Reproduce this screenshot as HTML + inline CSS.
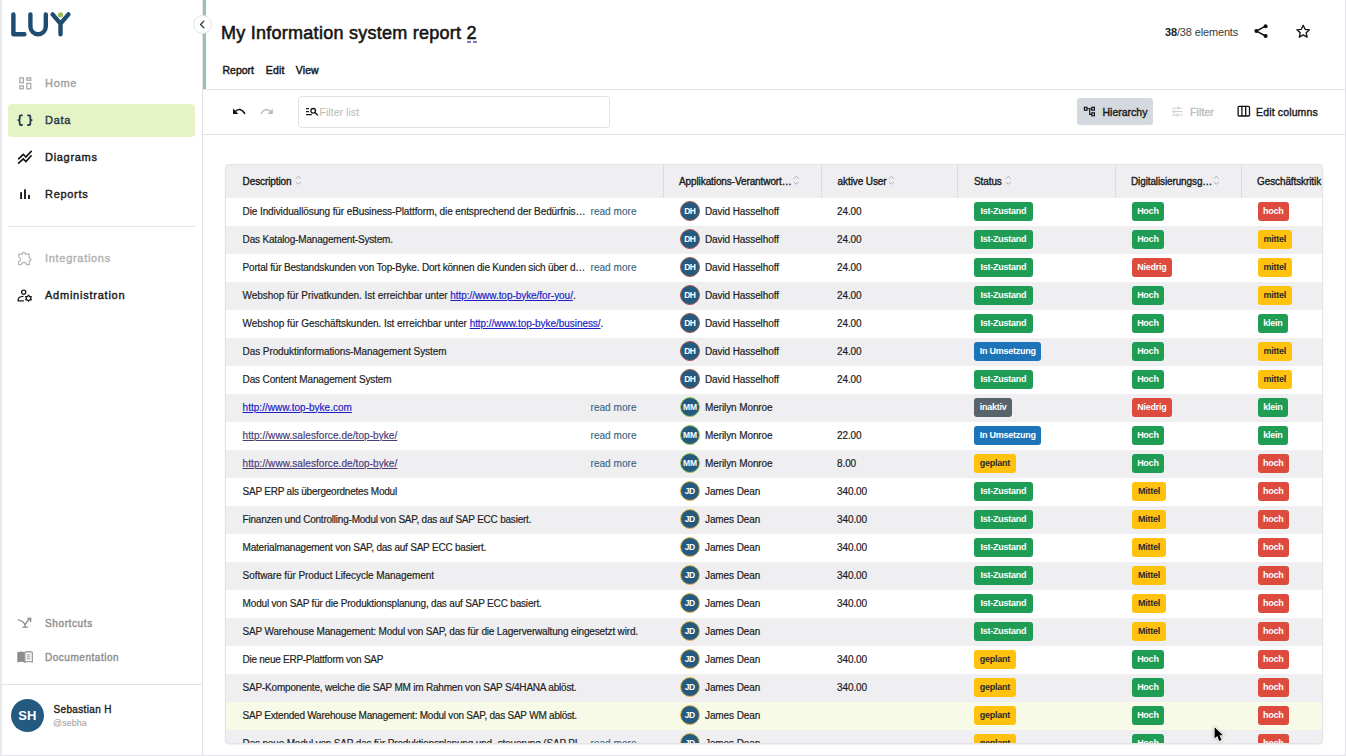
<!DOCTYPE html>
<html><head><meta charset="utf-8">
<style>
*{box-sizing:border-box;margin:0;padding:0}
html,body{width:1346px;height:756px;overflow:hidden;background:#fff}
body{position:relative;font-family:"Liberation Sans",sans-serif;color:#1a1a1a}
.a{position:absolute}
.t{position:absolute;white-space:nowrap;line-height:14px}
svg{position:absolute;overflow:visible}
/* sidebar */
.nav{position:absolute;left:45px;font-size:11px;font-weight:normal;-webkit-text-stroke:0.4px currentColor;letter-spacing:0.7px;line-height:14px;white-space:nowrap}
/* table */
#tbl{position:absolute;left:225px;top:163.5px;width:1098px;height:580.5px;border-radius:4px;overflow:hidden;background:#fff;box-shadow:0 1px 2px rgba(0,0,0,.07)}
#tbl:after{content:"";position:absolute;left:0;top:0;right:0;bottom:0;border:1px solid #e3e3e7;border-radius:4px;z-index:5}
.hd{position:absolute;left:0;top:0;height:34px;width:1098px;background:#efeff1}
.hc{position:absolute;top:1px;height:34px;font-size:10px;font-weight:normal;-webkit-text-stroke:0.35px #1a1a1a;line-height:34px;letter-spacing:-0.1px;color:#1a1a1a;white-space:nowrap}
.sep{position:absolute;top:0;width:1px;height:34px;background:#dcdce0}
.row{position:absolute;left:0;width:1098px;height:28px}
.row.g{background:#efeff1}
.row.h{background:#f7fae6}
.c{position:absolute;top:0;line-height:28px;font-size:10px;-webkit-text-stroke:0.18px currentColor;letter-spacing:-0.11px;color:#222;white-space:nowrap}
.rm{position:absolute;left:365.5px;top:0;line-height:28px;font-size:10px;-webkit-text-stroke:0.15px currentColor;color:#3a6785;letter-spacing:0.05px}
.srt{position:absolute;z-index:2}
a{color:#1d1dc4;text-decoration:underline}
a.v{color:#4a3d78}
.av{position:absolute;left:455px;top:3.5px;width:20px;height:20px;border-radius:50%;background:#245a80;border:1.6px solid #a8564b;color:#fff;font-size:8.5px;font-weight:bold;line-height:17px;padding-top:1px;text-align:center;letter-spacing:-0.75px;text-indent:-0.7px}
.av.mm{border-color:#97c74f;letter-spacing:-0.2px;text-indent:-0.2px}
.av.jd{border-color:#eab84a;letter-spacing:-0.55px;text-indent:-0.5px}
.nm{position:absolute;left:480px;top:0;line-height:28px;font-size:10px;-webkit-text-stroke:0.18px currentColor;letter-spacing:-0.1px;color:#1a1a1a;white-space:nowrap}
.num{position:absolute;left:612px;top:0;line-height:28px;font-size:10px;-webkit-text-stroke:0.18px currentColor;letter-spacing:-0.1px;color:#1a1a1a}
.b{position:absolute;top:4px;height:19px;border-radius:3px;font-size:9px;font-weight:bold;line-height:19px;text-align:center;color:#fff;letter-spacing:-0.25px;white-space:nowrap}
.gr{background:#1f9d55}.rd{background:#dd4b3e}.yl{background:#ffc20f;color:#2a2a2a}.bl{background:#1e74b9}.gy{background:#59636c}
.s1{left:749px}.s2{left:906.7px}.s3{left:1032.6px}
</style></head><body>

<!-- window borders -->
<div class="a" style="left:0;top:0;width:2px;height:756px;background:#e8e9ec"></div>
<div class="a" style="left:1345px;top:0;width:1px;height:756px;background:#e3e3e8"></div>
<div class="a" style="left:0;top:755px;width:1346px;height:1px;background:#e3e3e8"></div>

<!-- sidebar -->
<div class="a" style="left:202px;top:0;width:1px;height:755px;background:#e2e2e6"></div>


<!-- logo -->
<svg style="left:0;top:0" width="80" height="45" viewBox="0 0 80 45">
 <g fill="none" stroke="#1f4d72" stroke-width="4.4" stroke-linecap="round" stroke-linejoin="round">
  <path d="M13.4 14.4V34.2H24.4"/>
  <path d="M30.4 14.4V26.6A7.7 7.7 0 0 0 45.8 26.6V14.4"/>
  <path d="M52.6 14.4L60.5 23.6L68.4 14.4M60.5 23.6V34.2"/>
 </g>
 <circle cx="60.5" cy="14.8" r="2.6" fill="#9dbf5a"/>
</svg>

<!-- nav -->
<div class="a" style="left:8px;top:104px;width:187px;height:33px;border-radius:4px;background:#e6f3c4"></div>

<svg style="left:14px;top:72px" width="22" height="56" viewBox="14 72 22 56">
 <g fill="none" stroke="#a9a9a9" stroke-width="1.3">
  <rect x="19.85" y="77.85" width="3.5" height="5" />
  <rect x="19.85" y="85.95" width="3.5" height="2.8" />
  <rect x="26.85" y="77.85" width="3.9" height="2.4" />
  <rect x="26.85" y="83.35" width="3.9" height="5.4" />
 </g>
 <g fill="none" stroke="#1e3b4f" stroke-width="1.8" stroke-linejoin="round">
  <path d="M22.7 115.4H20.9C20.1 115.4 19.7 115.8 19.7 116.6V118.9C19.7 119.7 19.2 120.1 18.3 120.2C19.2 120.3 19.7 120.7 19.7 121.5V123.9C19.7 124.7 20.1 125 20.9 125H22.7"/>
  <path d="M27.3 115.4H29.1C29.9 115.4 30.3 115.8 30.3 116.6V118.9C30.3 119.7 30.8 120.1 31.7 120.2C30.8 120.3 30.3 120.7 30.3 121.5V123.9C30.3 124.7 29.9 125 29.1 125H27.3"/>
 </g>
</svg>
<div class="nav" style="top:76px;color:#a3a3a3">Home</div>


<div class="nav" style="top:113px;color:#1e3b4f">Data</div>

<svg style="left:14px;top:146px" width="22" height="56" viewBox="14 146 22 56">
 <g fill="none" stroke="#111" stroke-width="1.6" stroke-linecap="round" stroke-linejoin="miter">
  <path d="M18.6 158.8L23.3 154.3L25.9 157L31.2 151.4"/>
  <path d="M18.6 163.2L23.3 158.9L25.9 161.5L31.2 155.8"/>
 </g>
 <rect x="20.2" y="192.2" width="1.8" height="6.8" fill="#111"/>
 <rect x="24.1" y="189.3" width="1.8" height="9.7" fill="#111"/>
 <rect x="28.1" y="194.9" width="1.8" height="4.1" fill="#111"/>
</svg>
<div class="nav" style="top:150px">Diagrams</div>


<div class="nav" style="top:187px">Reports</div>

<div class="a" style="left:8px;top:226px;width:187px;height:1px;background:#e4e4e8"></div>

<svg style="left:15px;top:249px" width="20" height="20" viewBox="15 249 20 20">
 <path fill="none" stroke="#b3b3b3" stroke-width="1.15" stroke-linejoin="round" d="M18.7 254.1H22.3C22.4 253 23 252.4 23.9 252.4C24.8 252.4 25.4 253 25.5 254.1H29.3V258C30.5 258.1 31.1 258.6 31.1 259.3C31.1 260 30.5 260.5 29.3 260.6V264.6H26.5C26.4 263.2 25.3 262.4 23.9 262.4C22.5 262.4 21.4 263.2 21.3 264.6H18.7V261.5C19.9 261.2 20.6 260.4 20.6 259.3C20.6 258.2 19.9 257.3 18.7 257Z"/>
</svg>
<div class="nav" style="top:251px;color:#b3b3b3">Integrations</div>

<svg style="left:17px;top:289px" width="16" height="14" viewBox="0 0 16 14">
 <g fill="none" stroke="#1a1a1a" stroke-width="1.3">
  <circle cx="6.7" cy="3.3" r="2.1"/>
  <path d="M1.2 11.6V10.6C1.2 8.8 3 7.6 6 7.4" stroke-linecap="round"/>
  <path d="M1.2 11.8H6.4" stroke-linecap="round"/>
  <path d="M11.5 6.2L12.6 7.6L14.3 7.6L13.6 9.2L14.3 10.8L12.6 10.8L11.5 12.2L10.4 10.8L8.7 10.8L9.4 9.2L8.7 7.6L10.4 7.6Z" stroke-linejoin="round"/>
 </g>
</svg>
<div class="nav" style="top:288px;letter-spacing:0.76px">Administration</div>

<!-- bottom nav -->
<svg style="left:12px;top:610px" width="40" height="60" viewBox="12 610 40 60">
 <g fill="none" stroke="#8c8c8c" stroke-width="1.3" stroke-linecap="round" stroke-linejoin="round">
  <path d="M18.2 619.9C21.2 620.4 23.8 622.2 25.1 624.8V627.2"/>
  <path d="M25.1 624.8C26.2 622.4 28 620.2 30.6 618.4"/>
  <path d="M27.6 618.3H30.7V621.6"/>
  <path d="M22.8 627.2H27.3"/>
 </g>
 <path fill="#8c8c8c" d="M17.3 652.2C19.8 651.4 22.3 651.4 24.6 652.3V662.4C22.3 661.6 19.8 661.6 17.3 662.4Z"/>
 <path fill="none" stroke="#8c8c8c" stroke-width="1.1" d="M24.9 652.3C27.3 651.4 29.8 651.4 32.3 652.2V662C29.8 661.3 27.3 661.4 24.9 662.2Z"/>
 <path stroke="#8c8c8c" stroke-width="0.9" d="M26.7 654.9H30.4M26.7 656.9H30.4M26.7 658.9H30.4"/>
</svg>
<div class="nav" style="top:617px;font-size:10px;letter-spacing:0.62px;color:#8f8f8f">Shortcuts</div>
<div class="nav" style="top:651px;font-size:10px;letter-spacing:0.53px;color:#8f8f8f">Documentation</div>

<div class="a" style="left:1px;top:684px;width:201px;height:1px;background:#e2e2e6"></div>
<div class="a" style="left:10.5px;top:698.5px;width:33.5px;height:33.5px;border-radius:50%;background:#245a80;color:#fff;font-size:13px;font-weight:bold;line-height:34px;text-align:center">SH</div>
<div class="t" style="left:53.5px;top:703px;font-size:10px;-webkit-text-stroke:0.35px #1a1a1a;color:#1a1a1a;letter-spacing:0.35px">Sebastian H</div>
<div class="t" style="left:53px;top:716px;font-size:9px;color:#9a9a9a">@sebha</div>


<!-- header -->
<div class="a" style="left:203px;top:0;width:3px;height:89px;background:#94c5a8"></div>
<div class="a" style="left:193px;top:15px;width:19px;height:19px;border-radius:50%;background:#fff;border:1px solid #e4e4e8"></div>
<svg style="left:193px;top:15px" width="19" height="19" viewBox="0 0 19 19">
 <path d="M10.9 6.1L7.6 9.5L10.9 12.9" fill="none" stroke="#22404f" stroke-width="1.35" stroke-linecap="round" stroke-linejoin="round"/>
</svg>
<div class="t" style="left:221px;top:22px;font-size:18px;line-height:22px;font-weight:normal;-webkit-text-stroke:0.55px #141414;letter-spacing:0.26px;color:#141414">My Information system report 2</div>
<div class="a" style="left:466.6px;top:41.4px;width:4px;height:1.3px;background:#7d74c4;border-radius:0.6px"></div><div class="a" style="left:472.8px;top:41.4px;width:4px;height:1.3px;background:#7d74c4;border-radius:0.6px"></div>

<div class="t" style="left:1165px;top:25px;font-size:11px;color:#3a3a3a;letter-spacing:-0.15px"><b style="color:#222">38</b>/38 elements</div>
<svg style="left:1253px;top:23px" width="16" height="16" viewBox="0 0 16 16">
 <g fill="#111">
  <circle cx="12.6" cy="3.2" r="2"/><circle cx="3.4" cy="8.1" r="2"/><circle cx="12.6" cy="13" r="2"/>
 </g>
 <path d="M12.6 3.2L3.4 8.1L12.6 13" fill="none" stroke="#111" stroke-width="1.5"/>
</svg>
<svg style="left:1295px;top:23px" width="16" height="16" viewBox="0 0 16 16">
 <path d="M8.2 2.3L10.1 6.3L14.5 6.8L11.2 9.8L12.1 14.1L8.2 11.9L4.3 14.1L5.2 9.8L1.9 6.8L6.3 6.3Z" fill="none" stroke="#111" stroke-width="1.3" stroke-linejoin="round"/>
</svg>

<div class="t" style="left:222.5px;top:62.5px;font-size:10.5px;-webkit-text-stroke:0.45px #1a1a1a;color:#1a1a1a;letter-spacing:0px">Report</div>
<div class="t" style="left:265.8px;top:62.5px;font-size:10.5px;-webkit-text-stroke:0.45px #1a1a1a;color:#1a1a1a;letter-spacing:0.2px">Edit</div>
<div class="t" style="left:295.8px;top:62.5px;font-size:10.5px;-webkit-text-stroke:0.45px #1a1a1a;color:#1a1a1a;letter-spacing:0.1px">View</div>

<div class="a" style="left:203px;top:89px;width:1142px;height:1px;background:#e4e4e8"></div>

<!-- toolbar -->
<svg style="left:226px;top:100px" width="54" height="22" viewBox="226 100 54 22">
 <path d="M233 108.6V114H238.4Z" fill="#111"/>
 <path d="M235 111.8Q240 106.6 244.6 113.3" fill="none" stroke="#111" stroke-width="1.6" stroke-linecap="round"/>
 <path d="M272.9 108.6V114H267.5Z" fill="#bcbcbc"/>
 <path d="M270.9 111.8Q265.9 106.6 261.3 113.3" fill="none" stroke="#bcbcbc" stroke-width="1.5" stroke-linecap="round"/>
</svg>

<div class="a" style="left:298px;top:96px;width:312px;height:32px;border:1px solid #e2e2e6;border-radius:4px;background:#fff"></div>
<svg style="left:300px;top:100px" width="20" height="24" viewBox="300 100 20 24">
 <g fill="none" stroke="#1a1a1a">
  <path d="M306 108.6H309M306 111.6H309M306 114.6H311.8" stroke-width="1.1"/>
  <circle cx="313.2" cy="110.8" r="2.3" stroke-width="1.3"/>
  <path d="M314.9 112.5L317.6 114.9" stroke-width="1.4" stroke-linecap="round"/>
 </g>
</svg>
<div class="t" style="left:319.5px;top:105px;font-size:10.5px;color:#b8b8b8;letter-spacing:0.05px">Filter list</div>

<div class="a" style="left:1077px;top:98px;width:76px;height:27px;border-radius:3px;background:#d4d9df"></div>
<svg style="left:1080px;top:100px" width="20" height="22" viewBox="1080 100 20 22">
 <g fill="none" stroke="#111" stroke-width="1.15">
  <rect x="1084.4" y="107.3" width="2.6" height="2.9"/>
  <rect x="1091.8" y="107.3" width="2.6" height="2.9"/>
  <rect x="1091.8" y="112.8" width="2.6" height="3"/>
  <path d="M1087 108.75H1091.8M1089.7 108.75V114.3H1091.8"/>
 </g>
</svg>
<div class="t" style="left:1102.5px;top:105px;font-size:10.5px;-webkit-text-stroke:0.38px #1a1a1a;color:#1a1a1a;letter-spacing:0px">Hierarchy</div>

<svg style="left:1166px;top:100px" width="20" height="24" viewBox="1166 100 20 24">
 <g stroke="#c6c6c6" stroke-width="0.9" fill="none">
  <path d="M1172 108.2H1177.4M1179.2 108.2H1182.6M1172 111.6H1173.2M1175 111.6H1182.6M1172 115H1176.4M1178.2 115H1182.6"/>
  <path d="M1178.3 106.6V109.8M1174.1 110V113.2M1177.3 113.4V116.6" stroke-width="1.2"/>
 </g>
</svg>
<div class="t" style="left:1190px;top:105px;font-size:10.5px;-webkit-text-stroke:0.38px #bdbdbd;color:#bdbdbd;letter-spacing:0.1px">Filter</div>

<svg style="left:1237px;top:105px" width="14" height="13" viewBox="0 0 14 13">
 <g fill="none" stroke="#111" stroke-width="1.3">
  <rect x="1.1" y="1.4" width="11.4" height="9.6" rx="1"/>
  <path d="M4.9 1.4V11M8.7 1.4V11"/>
 </g>
</svg>
<div class="t" style="left:1256px;top:105px;font-size:10.5px;-webkit-text-stroke:0.38px #1a1a1a;color:#1a1a1a;letter-spacing:0.15px">Edit columns</div>

<div class="a" style="left:203px;top:134px;width:1142px;height:1px;background:#e4e4e8"></div>

<!-- table -->
<div id="tbl">
<div class="hd">
<div class="hc" style="left:17.6px"><span>Description</span></div>
<div class="hc" style="left:454px"><span style="letter-spacing:-0.1px">Applikations-Verantwort…</span></div>
<div class="hc" style="left:612.6px"><span>aktive User</span></div>
<div class="hc" style="left:749px"><span>Status</span></div>
<div class="hc" style="left:906px"><span style="letter-spacing:-0.12px">Digitalisierungsg…</span></div>
<div class="hc" style="left:1032px"><span>Geschäftskritik</span></div>
<svg class="srt" style="left:70.0px;top:11.5px" width="7" height="11" viewBox="0 0 7 11"><path d="M1.2 3.4L3.3 1.3L5.4 3.4M1.2 7.2L3.3 9.3L5.4 7.2" fill="none" stroke="#a9a9ad" stroke-width="0.95" stroke-linecap="round" stroke-linejoin="round"/></svg>
<svg class="srt" style="left:567.7px;top:11.5px" width="7" height="11" viewBox="0 0 7 11"><path d="M1.2 3.4L3.3 1.3L5.4 3.4M1.2 7.2L3.3 9.3L5.4 7.2" fill="none" stroke="#a9a9ad" stroke-width="0.95" stroke-linecap="round" stroke-linejoin="round"/></svg>
<svg class="srt" style="left:663.3px;top:11.5px" width="7" height="11" viewBox="0 0 7 11"><path d="M1.2 3.4L3.3 1.3L5.4 3.4M1.2 7.2L3.3 9.3L5.4 7.2" fill="none" stroke="#a9a9ad" stroke-width="0.95" stroke-linecap="round" stroke-linejoin="round"/></svg>
<svg class="srt" style="left:779.9px;top:11.5px" width="7" height="11" viewBox="0 0 7 11"><path d="M1.2 3.4L3.3 1.3L5.4 3.4M1.2 7.2L3.3 9.3L5.4 7.2" fill="none" stroke="#a9a9ad" stroke-width="0.95" stroke-linecap="round" stroke-linejoin="round"/></svg>
<svg class="srt" style="left:987.5px;top:11.5px" width="7" height="11" viewBox="0 0 7 11"><path d="M1.2 3.4L3.3 1.3L5.4 3.4M1.2 7.2L3.3 9.3L5.4 7.2" fill="none" stroke="#a9a9ad" stroke-width="0.95" stroke-linecap="round" stroke-linejoin="round"/></svg>
<div class="sep" style="left:438px"></div>
<div class="sep" style="left:595.5px"></div>
<div class="sep" style="left:732px"></div>
<div class="sep" style="left:889.5px"></div>
<div class="sep" style="left:1016px"></div>
</div>
<div class="row" style="top:34px">
<div class="c" style="left:17.6px;letter-spacing:-0.104px">Die Individuallösung für eBusiness-Plattform, die entsprechend der Bedürfnis…</div>
<div class="rm">read more</div>
<div class="av">DH</div><div class="nm">David Hasselhoff</div>
<div class="num">24.00</div>
<div class="b gr s1" style="width:58.6px">Ist-Zustand</div>
<div class="b gr s2" style="width:32.4px">Hoch</div>
<div class="b rd s3" style="width:31.3px">hoch</div>
</div>
<div class="row g" style="top:62px">
<div class="c" style="left:17.6px;letter-spacing:-0.181px">Das Katalog-Management-System.</div>
<div class="av">DH</div><div class="nm">David Hasselhoff</div>
<div class="num">24.00</div>
<div class="b gr s1" style="width:58.6px">Ist-Zustand</div>
<div class="b gr s2" style="width:32.4px">Hoch</div>
<div class="b yl s3" style="width:34.2px">mittel</div>
</div>
<div class="row" style="top:90px">
<div class="c" style="left:17.6px;letter-spacing:-0.182px">Portal für Bestandskunden von Top-Byke. Dort können die Kunden sich über d…</div>
<div class="rm">read more</div>
<div class="av">DH</div><div class="nm">David Hasselhoff</div>
<div class="num">24.00</div>
<div class="b gr s1" style="width:58.6px">Ist-Zustand</div>
<div class="b rd s2" style="width:40.6px">Niedrig</div>
<div class="b yl s3" style="width:34.2px">mittel</div>
</div>
<div class="row g" style="top:118px">
<div class="c" style="left:17.6px;letter-spacing:-0.048px">Webshop für Privatkunden. Ist erreichbar unter <a>http://www.top-byke/for-you/</a>.</div>
<div class="av">DH</div><div class="nm">David Hasselhoff</div>
<div class="num">24.00</div>
<div class="b gr s1" style="width:58.6px">Ist-Zustand</div>
<div class="b gr s2" style="width:32.4px">Hoch</div>
<div class="b yl s3" style="width:34.2px">mittel</div>
</div>
<div class="row" style="top:146px">
<div class="c" style="left:17.6px;letter-spacing:-0.047px">Webshop für Geschäftskunden. Ist erreichbar unter <a>http://www.top-byke/business/</a>.</div>
<div class="av">DH</div><div class="nm">David Hasselhoff</div>
<div class="num">24.00</div>
<div class="b gr s1" style="width:58.6px">Ist-Zustand</div>
<div class="b gr s2" style="width:32.4px">Hoch</div>
<div class="b gr s3" style="width:30.6px">klein</div>
</div>
<div class="row g" style="top:174px">
<div class="c" style="left:17.6px;letter-spacing:-0.086px">Das Produktinformations-Management System</div>
<div class="av">DH</div><div class="nm">David Hasselhoff</div>
<div class="num">24.00</div>
<div class="b bl s1" style="width:67.3px">In Umsetzung</div>
<div class="b gr s2" style="width:32.4px">Hoch</div>
<div class="b yl s3" style="width:34.2px">mittel</div>
</div>
<div class="row" style="top:202px">
<div class="c" style="left:17.6px;letter-spacing:-0.14px">Das Content Management System</div>
<div class="av">DH</div><div class="nm">David Hasselhoff</div>
<div class="num">24.00</div>
<div class="b gr s1" style="width:58.6px">Ist-Zustand</div>
<div class="b gr s2" style="width:32.4px">Hoch</div>
<div class="b yl s3" style="width:34.2px">mittel</div>
</div>
<div class="row g" style="top:230px">
<div class="c" style="left:17.6px;letter-spacing:0.016px"><a>http://www.top-byke.com</a></div>
<div class="rm">read more</div>
<div class="av mm">MM</div><div class="nm">Merilyn Monroe</div>
<div class="b gy s1" style="width:38.3px">inaktiv</div>
<div class="b rd s2" style="width:40.6px">Niedrig</div>
<div class="b gr s3" style="width:30.6px">klein</div>
</div>
<div class="row" style="top:258px">
<div class="c" style="left:17.6px;letter-spacing:0.071px"><a class="v">http://www.salesforce.de/top-byke/</a></div>
<div class="rm">read more</div>
<div class="av mm">MM</div><div class="nm">Merilyn Monroe</div>
<div class="num">22.00</div>
<div class="b bl s1" style="width:67.3px">In Umsetzung</div>
<div class="b gr s2" style="width:32.4px">Hoch</div>
<div class="b gr s3" style="width:30.6px">klein</div>
</div>
<div class="row g" style="top:286px">
<div class="c" style="left:17.6px;letter-spacing:0.071px"><a class="v">http://www.salesforce.de/top-byke/</a></div>
<div class="rm">read more</div>
<div class="av mm">MM</div><div class="nm">Merilyn Monroe</div>
<div class="num">8.00</div>
<div class="b yl s1" style="width:41.9px">geplant</div>
<div class="b gr s2" style="width:32.4px">Hoch</div>
<div class="b rd s3" style="width:31.3px">hoch</div>
</div>
<div class="row" style="top:314px">
<div class="c" style="left:17.6px;letter-spacing:-0.221px">SAP ERP als übergeordnetes Modul</div>
<div class="av jd">JD</div><div class="nm">James Dean</div>
<div class="num">340.00</div>
<div class="b gr s1" style="width:58.6px">Ist-Zustand</div>
<div class="b yl s2" style="width:34.5px">Mittel</div>
<div class="b rd s3" style="width:31.3px">hoch</div>
</div>
<div class="row g" style="top:342px">
<div class="c" style="left:17.6px;letter-spacing:-0.218px">Finanzen und Controlling-Modul von SAP, das auf SAP ECC basiert.</div>
<div class="av jd">JD</div><div class="nm">James Dean</div>
<div class="num">340.00</div>
<div class="b gr s1" style="width:58.6px">Ist-Zustand</div>
<div class="b yl s2" style="width:34.5px">Mittel</div>
<div class="b rd s3" style="width:31.3px">hoch</div>
</div>
<div class="row" style="top:370px">
<div class="c" style="left:17.6px;letter-spacing:-0.218px">Materialmanagement von SAP, das auf SAP ECC basiert.</div>
<div class="av jd">JD</div><div class="nm">James Dean</div>
<div class="num">340.00</div>
<div class="b gr s1" style="width:58.6px">Ist-Zustand</div>
<div class="b yl s2" style="width:34.5px">Mittel</div>
<div class="b rd s3" style="width:31.3px">hoch</div>
</div>
<div class="row g" style="top:398px">
<div class="c" style="left:17.6px;letter-spacing:-0.063px">Software für Product Lifecycle Management</div>
<div class="av jd">JD</div><div class="nm">James Dean</div>
<div class="num">340.00</div>
<div class="b gr s1" style="width:58.6px">Ist-Zustand</div>
<div class="b yl s2" style="width:34.5px">Mittel</div>
<div class="b rd s3" style="width:31.3px">hoch</div>
</div>
<div class="row" style="top:426px">
<div class="c" style="left:17.6px;letter-spacing:-0.18px">Modul von SAP für die Produktionsplanung, das auf SAP ECC basiert.</div>
<div class="av jd">JD</div><div class="nm">James Dean</div>
<div class="num">340.00</div>
<div class="b gr s1" style="width:58.6px">Ist-Zustand</div>
<div class="b yl s2" style="width:34.5px">Mittel</div>
<div class="b rd s3" style="width:31.3px">hoch</div>
</div>
<div class="row g" style="top:454px">
<div class="c" style="left:17.6px;letter-spacing:-0.16px">SAP Warehouse Management: Modul von SAP, das für die Lagerverwaltung eingesetzt wird.</div>
<div class="av jd">JD</div><div class="nm">James Dean</div>
<div class="b gr s1" style="width:58.6px">Ist-Zustand</div>
<div class="b yl s2" style="width:34.5px">Mittel</div>
<div class="b rd s3" style="width:31.3px">hoch</div>
</div>
<div class="row" style="top:482px">
<div class="c" style="left:17.6px;letter-spacing:-0.263px">Die neue ERP-Plattform von SAP</div>
<div class="av jd">JD</div><div class="nm">James Dean</div>
<div class="num">340.00</div>
<div class="b yl s1" style="width:41.9px">geplant</div>
<div class="b gr s2" style="width:32.4px">Hoch</div>
<div class="b rd s3" style="width:31.3px">hoch</div>
</div>
<div class="row g" style="top:510px">
<div class="c" style="left:17.6px;letter-spacing:-0.206px">SAP-Komponente, welche die SAP MM im Rahmen von SAP S/4HANA ablöst.</div>
<div class="av jd">JD</div><div class="nm">James Dean</div>
<div class="num">340.00</div>
<div class="b yl s1" style="width:41.9px">geplant</div>
<div class="b gr s2" style="width:32.4px">Hoch</div>
<div class="b rd s3" style="width:31.3px">hoch</div>
</div>
<div class="row h" style="top:538px">
<div class="c" style="left:17.6px;letter-spacing:-0.228px">SAP Extended Warehouse Management: Modul von SAP, das SAP WM ablöst.</div>
<div class="av jd">JD</div><div class="nm">James Dean</div>
<div class="b yl s1" style="width:41.9px">geplant</div>
<div class="b gr s2" style="width:32.4px">Hoch</div>
<div class="b rd s3" style="width:31.3px">hoch</div>
</div>
<div class="row g" style="top:566px">
<div class="c" style="left:17.6px;letter-spacing:-0.17px">Das neue Modul von SAP das für Produktionsplanung und -steuerung (SAP PI…</div>
<div class="rm">read more</div>
<div class="av jd">JD</div><div class="nm">James Dean</div>
<div class="b yl s1" style="width:41.9px">geplant</div>
<div class="b gr s2" style="width:32.4px">Hoch</div>
<div class="b rd s3" style="width:31.3px">hoch</div>
</div>
</div>
<!-- /table -->

<!-- cursor -->
<svg style="left:1210px;top:723px" width="20" height="24" viewBox="-4.6 -4.2 20 24">
 <path d="M0 0V11.2L2.7 8.8L4.6 13.7L6.9 12.8L5 8.1H8.4Z" fill="#000" stroke="#fff" stroke-width="1.8" stroke-linejoin="round" style="paint-order:stroke;filter:drop-shadow(0 0.6px 0.8px rgba(0,0,0,.3))"/>
</svg>
</body></html>
